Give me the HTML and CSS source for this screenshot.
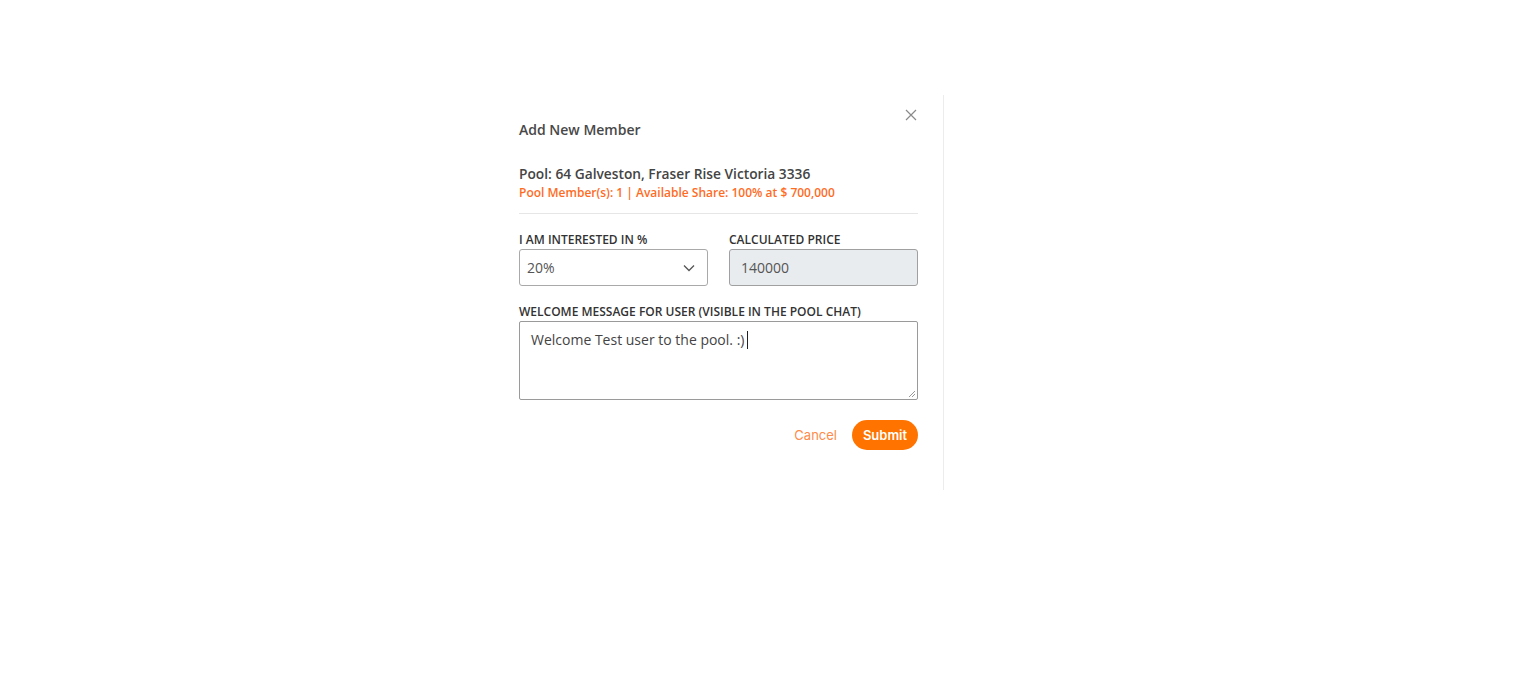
FILE: index.html
```html
<!DOCTYPE html>
<html>
<head>
<meta charset="utf-8">
<link rel="stylesheet" href="styles.css">
</head>
<body>
<div class="page">
  <div class="panel">
    <div class="head">
      <h2 class="title">Add New Member</h2>
      <button class="close" aria-label="Close">
        <svg width="12" height="12" viewBox="0 0 12 12"><path d="M1 1L11 11M11 1L1 11" stroke="#8a8a8a" stroke-width="1.2" fill="none"/></svg>
      </button>
    </div>
    <div class="pool">
      <div class="pool-name">Pool: 64 Galveston, Fraser Rise Victoria 3336</div>
      <div class="pool-meta">Pool Member(s): 1 | Available Share: 100% at $ 700,000</div>
    </div>
    <div class="divider"></div>
    <div class="row">
      <div class="field">
        <label class="label">I AM INTERESTED IN %</label>
        <div class="select">
          <span>20%</span>
          <svg width="12" height="8" viewBox="0 0 12 8"><path d="M1 1.5L6 6.5L11 1.5" stroke="#555" stroke-width="1.3" fill="none"/></svg>
        </div>
      </div>
      <div class="field">
        <label class="label">CALCULATED PRICE</label>
        <div class="input disabled">140000</div>
      </div>
    </div>
    <div class="field full">
      <label class="label">WELCOME MESSAGE FOR USER (VISIBLE IN THE POOL CHAT)</label>
      <div class="textarea"><span>Welcome Test user to the pool. :)</span><span class="caret"></span>
        <svg class="grip" width="8" height="8" viewBox="0 0 8 8"><path d="M7 1L1 7M7 4L4 7" stroke="#999" stroke-width="1"/></svg>
      </div>
    </div>
    <div class="actions">
      <button class="cancel">Cancel</button>
      <button class="submit">Submit</button>
    </div>
  </div>
</div>
</body>
</html>
```
FILE: styles.css
```css
* { box-sizing: border-box; }
html, body { margin: 0; padding: 0; background: #fff; }
body { font-family: "Open Sans", "Noto Sans", sans-serif; color: #444; }
.page { display: flex; justify-content: center; padding-top: 95px; padding-right: 97px; }
.panel {
  width: 449px;
  height: 395px;
  padding: 0 25px 0 24px;
  border-right: 1px solid #ececec;
  display: flex;
  flex-direction: column;
}
.head { display: flex; justify-content: space-between; align-items: flex-start; }
.title { margin: 25px 0 0; font-size: 14px; font-weight: 600; color: #484848; line-height: 20px; }
.close { border: 0; background: none; padding: 0; margin: 14px 1px 0 0; width: 12px; height: 12px; display: block; cursor: pointer; }
.close svg { display: block; }
.pool { margin-top: 24px; }
.pool-name { font-size: 13.75px; font-weight: 600; color: #444; line-height: 20px; }
.pool-meta { font-size: 12px; font-weight: 600; color: #ff6b1f; line-height: 18px; }
.divider { height: 1px; background: #e6e6e6; margin-top: 11px; flex: none; }
.row { display: flex; gap: 21px; margin-top: 18px; }
.field { flex: 1; display: flex; flex-direction: column; }
.label { font-size: 12px; font-weight: 600; color: #333; line-height: 16px; margin-bottom: 1px; }
.select, .input {
  height: 37px;
  border: 1px solid #a9a9a9;
  border-radius: 3px;
  font-size: 14px;
  color: #555;
  display: flex;
  align-items: center;
  padding: 0 12px 0 7px;
}
.select { justify-content: space-between; }
.input.disabled { background: #e9ecef; border-color: #a0a0a0; padding-left: 11px; }
.full { flex: none; margin-top: 18px; }
.textarea {
  position: relative;
  height: 79px;
  border: 1px solid #9a9a9a;
  border-radius: 2px;
  padding: 8px 11px;
  font-size: 14px;
  color: #444;
  line-height: 20px;
  display: block;
}
.caret { display: inline-block; width: 1px; height: 18px; background: #222; vertical-align: -4px; margin-left: 3px; }
.grip { position: absolute; right: 1px; bottom: 1px; }
.actions { display: flex; justify-content: flex-end; align-items: center; gap: 15px; margin-top: 20px; }
.cancel { border: 0; background: none; font-family: "Inter", "Lato", sans-serif; font-size: 13px; color: #ff8a4a; padding: 0; cursor: pointer; }
.submit {
  border: 0;
  background: #ff7400;
  color: #fff;
  font-family: "Inter", "Lato", sans-serif;
  font-weight: 600;
  font-size: 13px;
  height: 30px;
  width: 66px;
  border-radius: 15px;
  cursor: pointer;
}
```
